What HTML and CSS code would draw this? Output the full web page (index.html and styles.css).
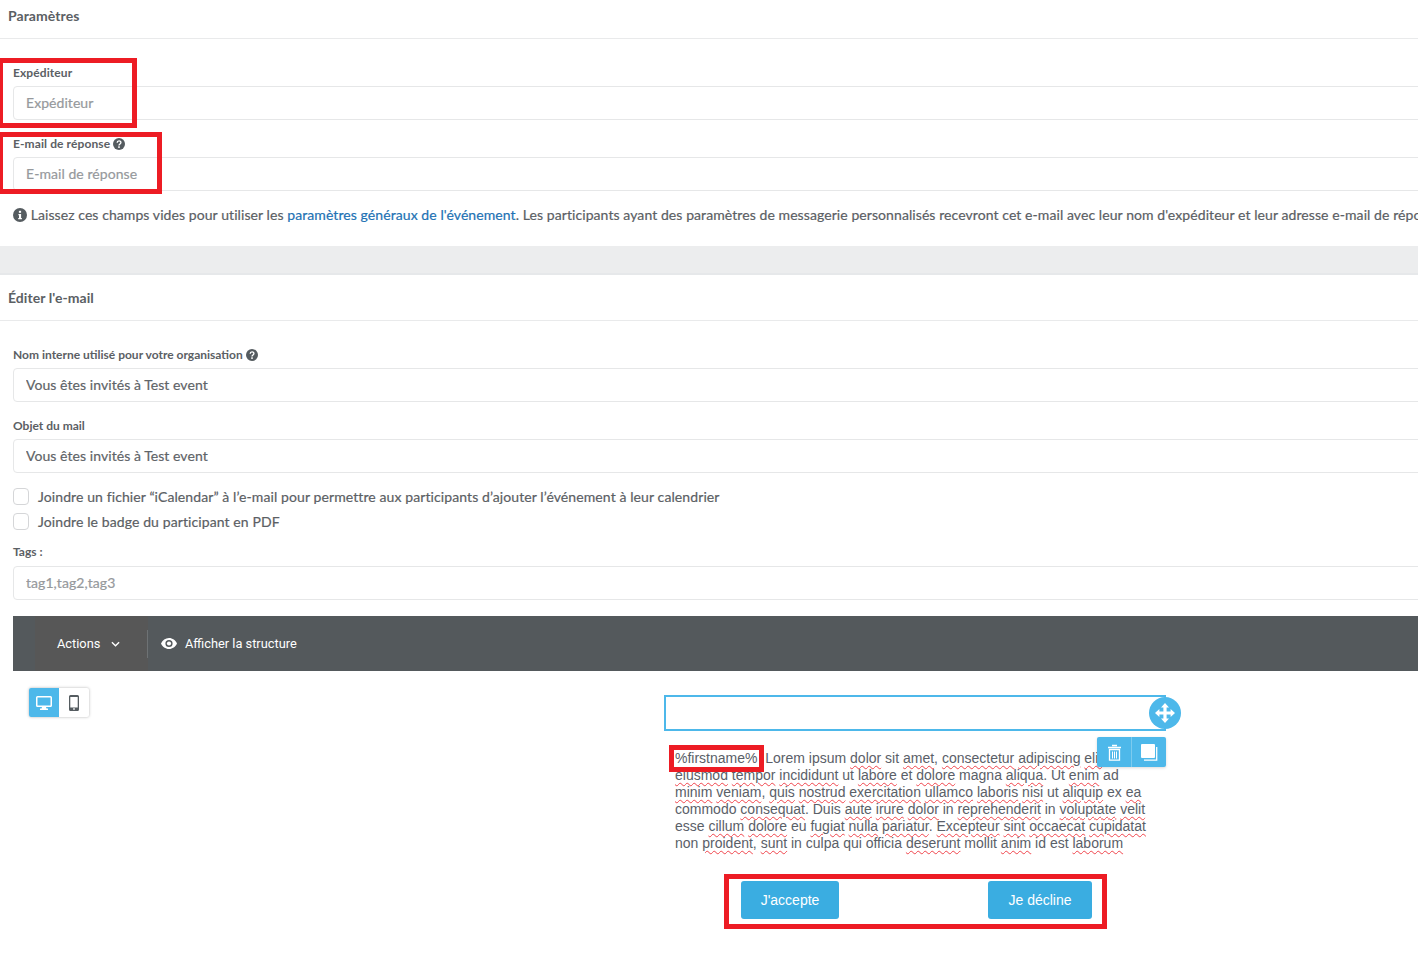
FILE: index.html
```html
<!DOCTYPE html>
<html lang="fr">
<head>
<meta charset="utf-8">
<title>Paramètres</title>
<link rel="stylesheet" href="styles.css">
</head>
<body>
<div class="page">
  <section class="panel">
    <h2 class="panel-title">Paramètres</h2>
    <div class="panel-body first">
      <div class="field">
        <label class="label">Expéditeur</label>
        <input class="input" placeholder="Expéditeur">
      </div>
      <div class="field">
        <label class="label">E-mail de réponse
          <svg class="help" viewBox="0 0 12 12"><circle cx="6" cy="6" r="6" fill="#555c60"/><path d="M4.2 4.7c0-2.4 3.7-2.4 3.7-.2 0 1.5-1.9 1.4-1.9 2.9" fill="none" stroke="#fff" stroke-width="1.4"/><rect x="5.2" y="8.3" width="1.6" height="1.6" fill="#fff"/></svg>
        </label>
        <input class="input" placeholder="E-mail de réponse">
      </div>
      <p class="info">
        <svg class="info-icon" viewBox="0 0 14 14"><circle cx="7" cy="7" r="7" fill="#555c60"/><rect x="5.9" y="2.8" width="2.2" height="2" fill="#fff"/><path d="M5.4 6h2.7v4h.8v1.2H5.2V10h.8V7.2h-.6z" fill="#fff"/></svg>
        Laissez ces champs vides pour utiliser les <a class="link">paramètres généraux de l'événement</a>. Les participants ayant des paramètres de messagerie personnalisés recevront cet e-mail avec leur nom d'expéditeur et leur adresse e-mail de réponse.
      </p>
    </div>
  </section>

  <div class="band"></div>

  <section class="panel">
    <h2 class="panel-title">Éditer l'e-mail</h2>
    <div class="panel-body second">
      <div class="field">
        <label class="label">Nom interne utilisé pour votre organisation
          <svg class="help" viewBox="0 0 12 12"><circle cx="6" cy="6" r="6" fill="#555c60"/><path d="M4.2 4.7c0-2.4 3.7-2.4 3.7-.2 0 1.5-1.9 1.4-1.9 2.9" fill="none" stroke="#fff" stroke-width="1.4"/><rect x="5.2" y="8.3" width="1.6" height="1.6" fill="#fff"/></svg>
        </label>
        <input class="input" value="Vous êtes invités à Test event">
      </div>
      <div class="field">
        <label class="label">Objet du mail</label>
        <input class="input" value="Vous êtes invités à Test event">
      </div>
      <div class="checks">
        <label class="check"><span class="box"></span>Joindre un fichier “iCalendar” à l’e-mail pour permettre aux participants d’ajouter l’événement à leur calendrier</label>
        <label class="check"><span class="box"></span>Joindre le badge du participant en PDF</label>
      </div>
      <div class="field tags">
        <label class="label">Tags :</label>
        <input class="input" placeholder="tag1,tag2,tag3">
      </div>

      <div class="toolbar">
        <div class="actions">Actions
          <svg class="chev" viewBox="0 0 10 6"><path d="M1 1l4 4 4-4" fill="none" stroke="#fff" stroke-width="1.5"/></svg>
        </div>
        <div class="sep"></div>
        <div class="show">
          <svg class="eye" viewBox="0 0 16 11"><path fill-rule="evenodd" d="M8 0c3.6 0 6.5 2.3 8 5.5C14.500 8.700 11.600 11 8 11S1.500 8.700 0 5.500C1.500 2.300 4.400 0 8 0zm0 1.900a3.600 3.600 0 1 0 0 7.200 3.600 3.600 0 0 0 0-7.200z" fill="#fff"/><circle cx="8" cy="5.500" r="2.100" fill="#fff"/></svg>
          Afficher la structure
        </div>
      </div>

      <div class="canvas">
        <div class="devices">
          <span class="device on">
            <svg viewBox="0 0 16 14" width="16" height="14"><path fill-rule="evenodd" d="M1.500 0h13A1.500 1.500 0 0 1 16 1.500v8a1.500 1.500 0 0 1-1.500 1.500H10l.5 1.500H12V14H4v-1.500h1.500L6 11H1.500A1.500 1.500 0 0 1 0 9.500v-8A1.500 1.500 0 0 1 1.500 0zM1.500 1.500v8h13v-8z" fill="#fff"/></svg>
          </span>
          <span class="device">
            <svg viewBox="0 0 10 16" width="10" height="16"><path fill-rule="evenodd" d="M1.500 0h7A1.500 1.500 0 0 1 10 1.500v13A1.500 1.500 0 0 1 8.500 16h-7A1.500 1.500 0 0 1 0 14.500v-13A1.500 1.500 0 0 1 1.500 0zM1.300 2v10.500h7.400V2zM4.200 13.300v1.400h1.600v-1.400z" fill="#555c60"/></svg>
          </span>
        </div>

        <div class="mail">
          <div class="selected">
            <span class="move">
              <svg viewBox="0 0 20 20" width="20" height="20"><path d="M10 0l4 4.400h-2.400v4h4V6L20 10l-4.400 4v-2.400h-4v4H14L10 20l-4-4.400h2.400v-4h-4V14L0 10l4.400-4v2.400h4v-4H6z" fill="#fff"/></svg>
            </span>
          </div>
          <div class="copy">
            <p class="lorem"><span class="line-one">%firstname%&nbsp; Lorem ipsum <span class="sq">dolor</span> sit <span class="sq">amet</span>, <span class="sq">consectetur</span> <span class="sq">adipiscing</span> <span class="sq">elit</span>, sed do</span><span class="sq">eiusmod</span> <span class="sq">tempor</span> <span class="sq">incididunt</span> ut <span class="sq">labore</span> et <span class="sq">dolore</span> magna <span class="sq">aliqua</span>. Ut <span class="sq">enim</span> ad <span class="sq">minim</span> <span class="sq">veniam</span>, <span class="sq">quis</span> <span class="sq">nostrud</span> <span class="sq">exercitation</span> <span class="sq">ullamco</span> <span class="sq">laboris</span> <span class="sq">nisi</span> ut <span class="sq">aliquip</span> ex <span class="sq">ea</span> commodo <span class="sq">consequat</span>. Duis <span class="sq">aute</span> <span class="sq">irure</span> <span class="sq">dolor</span> in <span class="sq">reprehenderit</span> in <span class="sq">voluptate</span> <span class="sq">velit</span> esse <span class="sq">cillum</span> <span class="sq">dolore</span> eu <span class="sq">fugiat</span> <span class="sq">nulla</span> <span class="sq">pariatur</span>. <span class="sq">Excepteur</span> <span class="sq">sint</span> <span class="sq">occaecat</span> <span class="sq">cupidatat</span> non <span class="sq">proident</span>, <span class="sq">sunt</span> in culpa qui officia <span class="sq">deserunt</span> mollit <span class="sq">anim</span> id est <span class="sq">laborum</span></p>
            <span class="tools">
              <span class="tool">
                <svg viewBox="0 0 15 17" width="15" height="17"><path d="M5 1.500h5M1 3.500h13" stroke="#fff" stroke-width="1.500" fill="none"/><path d="M2.500 5.500h10v10.700h-10z" stroke="#fff" stroke-width="1.300" fill="none"/><path d="M5.500 7.500v7M7.500 7.500v7M9.500 7.500v7" stroke="#fff" stroke-width="1"/></svg>
              </span>
              <span class="tool">
                <svg viewBox="0 0 17 17" width="17" height="17"><rect width="14" height="14" rx="1" fill="#fff"/><path d="M15.700 3v13.200H3" fill="none" stroke="#fff" stroke-width="1.300"/></svg>
              </span>
            </span>
          </div>
          <div class="buttons">
            <a class="btn accept">J'accepte</a>
            <a class="btn decline">Je décline</a>
          </div>
        </div>
      </div>
    </div>
  </section>

  <div class="mark mark-sender"></div>
  <div class="mark mark-reply"></div>
  <div class="mark mark-name"></div>
  <div class="mark mark-buttons"></div>
</div>
</body>
</html>
```
FILE: styles.css
```css
* { box-sizing: border-box; }
html, body { margin: 0; padding: 0; background: #fff; overflow: hidden; }
body { height: 967px; }
.page { position: relative; width: 1600px; height: 967px; font-family: Lato, "Open Sans", sans-serif; color: #5b6064; font-size: 14px; }

.panel-title { margin: 0; height: 39px; padding: 7px 8px 0; font-size: 14px; line-height: 17px; font-weight: 700; color: #5b6064; letter-spacing: .06px; border-bottom: 1px solid #e9eaeb; }
.panel-body { padding-left: 13px; }
.panel-body.first { padding-top: 25px; }
.panel-body.second { padding-top: 25px; }
.panel:nth-of-type(2) .panel-title { height: 46px; padding-top: 14px; }

.field { margin-bottom: 15px; }
.label { display: flex; align-items: center; gap: 3px; height: 17px; margin-bottom: 5px; font-size: 12px; line-height: 17px; font-weight: 700; color: #5b6064; }
.first .label { letter-spacing: .1px; }
.help { width: 12px; height: 12px; }
.input { display: block; width: 100%; height: 34px; padding: 0 12px 2px; border: 1px solid #e6e7e8; border-radius: 4px; background: #fff; font: 14px Lato, "Open Sans", sans-serif; letter-spacing: .06px; color: #5f6468; -webkit-text-stroke: .2px; outline: none; }
.input::placeholder { color: #96999c; opacity: 1; }

.info { margin: 0; height: 40px; line-height: 17px; white-space: nowrap; font-size: 14px; letter-spacing: .08px; color: #5b6064; -webkit-text-stroke: .2px; }
.info-icon { width: 14px; height: 14px; vertical-align: -2px; }
.link { color: #2272b4; }

.band { height: 29px; background: #ecedee; border-bottom: 2px solid #e6e8ea; }

.checks { display: flex; flex-direction: column; gap: 8px; margin-bottom: 13px; }
.check { display: flex; align-items: center; gap: 9px; height: 17px; line-height: 17px; font-size: 14px; letter-spacing: .1px; color: #5b6064; -webkit-text-stroke: .2px; }
.box { width: 16px; height: 17px; border: 1px solid #d5d6d8; border-radius: 4px; background: #fff; }

.tags { margin-bottom: 16px; }
.tags .label { margin-bottom: 6px; }

.toolbar { display: flex; align-items: center; height: 55px; background: #54595c; color: #fff; font-family: Roboto, sans-serif; font-size: 12.8px; }
.actions { display: flex; align-items: center; height: 100%; margin-left: 22px; width: 113px; padding-left: 22px; background: #575757; gap: 11px; }
.chev { width: 9px; height: 6px; }
.sep { width: 1px; height: 28px; background: #6e7274; margin-left: -1px; }
.show { display: flex; align-items: center; gap: 8px; margin-left: 13px; }
.eye { width: 16px; height: 11px; }

.canvas { position: relative; height: 296px; }
.devices { position: absolute; left: 16px; top: 17px; display: flex; width: 60px; height: 29px; border-radius: 2px; box-shadow: 0 0 3px rgba(0,0,0,.3); background: #fff; overflow: hidden; }
.device { flex: 1; display: flex; align-items: center; justify-content: center; }
.device.on { background: #4db8ea; }

.mail { position: absolute; left: 651px; top: 24px; width: 502px; }
.selected { position: relative; height: 36px; border: 2px solid #4db8ea; }
.move { position: absolute; right: -17px; top: 0; width: 32px; height: 32px; border-radius: 50%; background: #4db8ea; display: flex; align-items: center; justify-content: center; }
.copy { position: relative; padding: 19px 10px 0 11px; }
.tools { position: absolute; right: 0; top: 6px; display: flex; width: 69px; height: 30px; border-radius: 2px; background: #4db8ea; box-shadow: 0 1px 3px rgba(0,0,0,.15); }
.tool { flex: 1; display: flex; align-items: center; justify-content: center; }
.tool + .tool { border-left: 1px solid #7ccbef; }
.lorem { margin: 0; width: 476px; font-family: "Liberation Sans", Arial, sans-serif; font-size: 14px; line-height: 17px; color: #5a6068; }
.line-one { display: block; white-space: nowrap; }
.sq { text-decoration: underline wavy #f0444c 1px; text-underline-offset: 2px; }

.buttons { display: flex; justify-content: space-between; padding: 29px 74px 0 77px; }
.btn { display: flex; align-items: center; justify-content: center; height: 38px; border-radius: 3px; background: #3aade1; color: #fff; font-family: "Liberation Sans", Arial, sans-serif; font-size: 14px; }
.accept { width: 98px; }
.decline { width: 104px; }

.mark { position: absolute; border: 5px solid #ed1c24; }
.mark-sender { left: -2px; top: 58px; width: 139px; height: 70px; }
.mark-reply { left: -2px; top: 132px; width: 164px; height: 62px; }
.mark-name { left: 669px; top: 745px; width: 95px; height: 27px; }
.mark-buttons { left: 724px; top: 874px; width: 383px; height: 55px; }
```
